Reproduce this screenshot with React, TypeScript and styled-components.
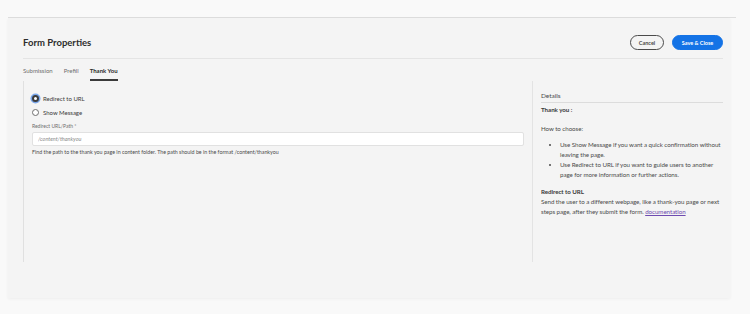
import styled, { createGlobalStyle } from "styled-components";

const GlobalStyle = createGlobalStyle`
  html, body {
    margin: 0;
    padding: 0;
    background: #f9f9f9;
    font-family: Lato, "Open Sans", sans-serif;
    color: #4b4b4b;
  }
`;

const Page = styled.div`
  width: 750px;
  height: 314px;
  padding: 17px 14px 0 8px;
  box-sizing: border-box;
`;

const TopRule = styled.div`
  height: 1px;
  background: #dedede;
`;

const Dialog = styled.div`
  margin-right: 6px;
  height: 280px;
  box-sizing: border-box;
  padding: 17px 7px 0 15px;
  background: #f4f4f4;
  box-shadow: 0 1px 3px rgba(0, 0, 0, 0.05);
  display: flex;
  flex-direction: column;
`;

const Header = styled.div`
  display: flex;
  align-items: center;
  justify-content: space-between;
  height: 15px;
  padding-bottom: 8px;
  border-bottom: 1px solid #e4e4e4;
`;

const Title = styled.h1`
  margin: 0;
  font-size: 9.5px;
  font-weight: 700;
  color: #2c2c2c;
`;

const Actions = styled.div`
  display: flex;
  gap: 8px;
`;

const Button = styled.button<{ $primary?: boolean }>`
  height: 15px;
  padding: 0 7px;
  border-radius: 8px;
  font-family: inherit;
  font-size: 5.5px;
  font-weight: 700;
  cursor: pointer;
  border: 1.2px solid ${(p) => (p.$primary ? "#1473e6" : "#4b4b4b")};
  background: ${(p) => (p.$primary ? "#1473e6" : "transparent")};
  color: ${(p) => (p.$primary ? "#ffffff" : "#4b4b4b")};
  min-width: ${(p) => (p.$primary ? "51px" : "34px")};
`;

const Tabs = styled.div`
  display: flex;
  gap: 11px;
  height: 22px;
`;

const Tab = styled.div<{ $active?: boolean }>`
  display: flex;
  align-items: center;
  font-size: 6px;
  font-weight: ${(p) => (p.$active ? 700 : 400)};
  color: ${(p) => (p.$active ? "#2c2c2c" : "#6e6e6e")};
  border-bottom: 2px solid ${(p) => (p.$active ? "#3a3a3a" : "transparent")};
  box-sizing: border-box;
  padding-top: 2px;
`;

const Body = styled.div`
  display: flex;
  height: 181px;
`;

const Main = styled.div`
  flex: 1;
  border-left: 1px solid #e0e0e0;
  padding: 10px 8px 0 8px;
  display: flex;
  flex-direction: column;
`;

const Side = styled.div`
  width: 182px;
  border-left: 1px solid #e3e3e3;
  padding: 10px 0 0 8px;
  font-size: 6.2px;
  line-height: 9.8px;
  letter-spacing: -0.05px;
  color: #4b4b4b;
`;

const RadioRow = styled.label`
  display: flex;
  align-items: center;
  gap: 4px;
  height: 14px;
  font-size: 6px;
  color: #3a3a3a;
`;

const RadioDot = styled.span<{ $checked?: boolean }>`
  width: 7px;
  height: 7px;
  border-radius: 50%;
  box-sizing: border-box;
  background: #fff;
  border: ${(p) => (p.$checked ? "2.5px solid #3c3c3c" : "1px solid #6e6e6e")};
  box-shadow: ${(p) => (p.$checked ? "0 0 0 1.5px #7ba7ea" : "none")};
`;

const FieldLabel = styled.div`
  margin-top: 3px;
  font-size: 5px;
  color: #6e6e6e;
  line-height: 8px;
`;

const Input = styled.input`
  margin-top: 2px;
  height: 14px;
  box-sizing: border-box;
  width: 100%;
  border: 1px solid #e1e1e1;
  border-radius: 2px;
  background: #fff;
  padding: 0 5px;
  font-family: inherit;
  font-size: 5.5px;
  &::placeholder {
    font-style: italic;
    color: #8a8a8a;
  }
`;

const Help = styled.div`
  margin-top: 3px;
  font-size: 5.3px;
  color: #4b4b4b;
`;

const SideTitle = styled.div`
  font-size: 6.5px;
  color: #4b4b4b;
  padding-bottom: 1px;
  margin-bottom: 2px;
  border-bottom: 1px solid #dcdcdc;
`;

const Strong = styled.div`
  font-weight: 700;
  color: #3a3a3a;
`;

const Para = styled.p`
  margin: 0;
`;

const Bullets = styled.ul`
  margin: 6px 0 8px 0;
  padding-left: 19px;
`;

const Link = styled.a`
  color: #6e4bb0;
  text-decoration: underline;
`;

export default function App() {
  return (
    <>
      <GlobalStyle />
      <Page>
        <TopRule />
        <Dialog>
          <Header>
            <Title>Form Properties</Title>
            <Actions>
              <Button>Cancel</Button>
              <Button $primary>Save &amp; Close</Button>
            </Actions>
          </Header>
          <Tabs>
            <Tab>Submission</Tab>
            <Tab>Prefill</Tab>
            <Tab $active>Thank You</Tab>
          </Tabs>
          <Body>
            <Main>
              <RadioRow>
                <RadioDot $checked />
                Redirect to URL
              </RadioRow>
              <RadioRow>
                <RadioDot />
                Show Message
              </RadioRow>
              <FieldLabel>Redirect URL/Path *</FieldLabel>
              <Input placeholder="/content/thankyou" />
              <Help>
                Find the path to the thank you page in content folder. The path
                should be in the format /content/thankyou
              </Help>
            </Main>
            <Side>
              <SideTitle>Details</SideTitle>
              <Strong>Thank you :</Strong>
              <Para>&nbsp;</Para>
              <Para>How to choose:</Para>
              <Bullets>
                <li>
                  Use Show Message if you want a quick confirmation without
                  leaving the page.
                </li>
                <li>
                  Use Redirect to URL if you want to guide users to another
                  page for more information or further actions.
                </li>
              </Bullets>
              <Strong>Redirect to URL</Strong>
              <Para>
                Send the user to a different webpage, like a thank-you page or
                next steps page, after they submit the form.{" "}
                <Link href="#">documentation</Link>
              </Para>
            </Side>
          </Body>
        </Dialog>
      </Page>
    </>
  );
}
